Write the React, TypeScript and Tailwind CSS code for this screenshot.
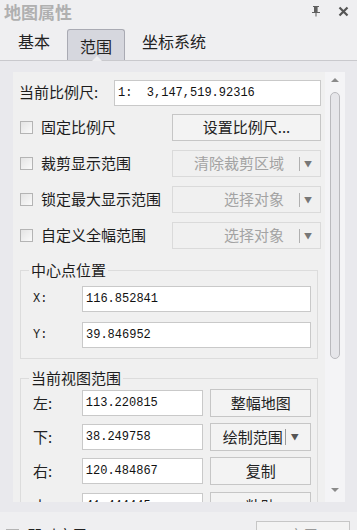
import React from 'react';

const cjk = "font-['Noto_Sans_CJK_SC',sans-serif]";
const mono = "font-['Liberation_Mono','Noto_Sans_CJK_SC',monospace]";

const CheckBox: React.FC = () => (
  <span className="inline-block w-[13px] h-[13px] shrink-0 border border-[#b4b4b4] bg-gradient-to-br from-[#e4e4e4] to-[#fafafa]" />
);

const TextBox: React.FC<{ value: string; className?: string }> = ({ value, className }) => (
  <div
    className={`h-[26px] bg-white border border-[#c9c9c9] flex items-center pl-[3px] text-[12px] text-[#111] whitespace-pre ${mono} ${className ?? ''}`}
  >
    {value}
  </div>
);

const SplitButton: React.FC<{ label: string; disabled?: boolean }> = ({ label, disabled }) => (
  <div
    className={`ml-auto w-[149px] h-[27px] border flex items-center justify-end pr-[8px] text-[15px] ${
      disabled ? 'border-[#dadada] text-[#a3a3a3]' : 'border-[#c6c6c6] text-[#222]'
    }`}
  >
    <span>{label}</span>
    <span className="ml-[15px] w-px h-[14px] bg-[#b0b0b0]" />
    <span className="ml-[4px] text-[8px] text-[#777]">▼</span>
  </div>
);

const CheckRow: React.FC<{ label: string; children: React.ReactNode }> = ({ label, children }) => (
  <div className="flex items-center h-[27px] mt-[9px]">
    <div className="pl-[1px] flex items-center gap-[8px] text-[15px] text-[#1d1d1d]">
      <CheckBox />
      <span>{label}</span>
    </div>
    {children}
  </div>
);

const GroupBox: React.FC<{ title: string; children: React.ReactNode; className?: string }> = ({
  title,
  children,
  className,
}) => (
  <div className={`relative mr-[3px] border border-[#dcdcdc] ${className ?? ''}`}>
    <span className="absolute left-[8px] -top-[12px] px-[2px] bg-[#f0f0f0] text-[15px] text-[#1d1d1d] leading-[22px]">
      {title}
    </span>
    {children}
  </div>
);

const CoordRow: React.FC<{ label: string; value: string; className?: string }> = ({ label, value, className }) => (
  <div className={`flex items-center ${className ?? ''}`}>
    <span className={`w-[49px] text-[12px] text-[#222] ${mono}`}>{label}</span>
    <TextBox value={value} className="flex-1" />
  </div>
);

const ViewRow: React.FC<{ label: string; value: string; button: string; split?: boolean; className?: string }> = ({
  label,
  value,
  button,
  split,
  className,
}) => (
  <div className={`flex items-center ${className ?? ''}`}>
    <span className="w-[49px] text-[15px] text-[#222]">{label}:</span>
    <TextBox value={value} className="w-[122px]" />
    <div className="ml-[7px] w-[101px] h-[28px] border border-[#c6c6c6] bg-[#f3f3f3] flex items-center justify-center text-[15px] text-[#222]">
      <span>{button}</span>
      {split && (
        <>
          <span className="ml-[2px] w-px h-[16px] bg-[#999]" />
          <span className="ml-[5px] text-[8px] text-[#555]">▼</span>
        </>
      )}
    </div>
  </div>
);

export default function App() {
  return (
    <div className={`w-[357px] h-[530px] overflow-hidden bg-[#efeff1] ${cjk} select-none`}>
      {/* title bar */}
      <div className="h-[22px] flex items-center pl-[4px] pr-[8px]">
        <span className="text-[17px] font-bold text-[#b0b0b0] leading-none">地图属性</span>
        <svg width="10" height="12" viewBox="0 0 10 12" className="ml-auto mr-[17px]">
          <path d="M2 1H8V2H7V7H9V8H5.5V11.5H4.5V8H1V7H3V2H2Z" fill="#5f5f5f" />
          <rect x="6" y="2" width="1" height="5" fill="#9a9a9a" />
        </svg>
        <svg width="11" height="11" viewBox="0 0 11 11">
          <path d="M1.5 1.5L9.5 9.5M9.5 1.5L1.5 9.5" stroke="#555" strokeWidth="2.2" />
        </svg>
      </div>

      {/* tabs */}
      <div className="h-[39px] flex items-end pl-[18px] border-b border-[#c9c9cd] relative">
        <span className="mb-[7px] text-[16px] text-[#222]">基本</span>
        <div className="ml-[17px] w-[58px] h-[31px] rounded-t-[3px] border border-b-0 border-[#a9aab3] bg-[#d6d7de] flex items-center justify-center pt-[2px] text-[16px] text-[#222] relative">
          范围
          <span className="absolute -bottom-[1px] left-[24px] w-0 h-0 border-l-[5px] border-r-[5px] border-b-[5px] border-l-transparent border-r-transparent border-b-[#efeff1]" />
        </div>
        <span className="ml-[17px] mb-[7px] text-[16px] text-[#222]">坐标系统</span>
      </div>

      {/* body */}
      <div className="bg-[#e9e9ed] pl-[13px] pr-[12px] pt-[11px] pb-[10px]">
        <div className="flex h-[430px]">
          <div className="flex-1 bg-[#f0f0f0] overflow-hidden pl-[6px] pr-[4px] pt-[8px]">
            <div className="flex items-center h-[25px]">
              <span className="w-[95px] text-[15px] text-[#1d1d1d]">当前比例尺:</span>
              <TextBox value="1:  3,147,519.92316" className="flex-1 h-[25px]" />
            </div>

            <CheckRow label="固定比例尺">
              <div className="ml-auto w-[149px] h-[27px] border border-[#c6c6c6] bg-[#f3f3f3] flex items-center justify-center text-[15px] text-[#222]">
                设置比例尺...
              </div>
            </CheckRow>
            <CheckRow label="裁剪显示范围">
              <SplitButton label="清除裁剪区域" disabled />
            </CheckRow>
            <CheckRow label="锁定最大显示范围">
              <SplitButton label="选择对象" disabled />
            </CheckRow>
            <CheckRow label="自定义全幅范围">
              <SplitButton label="选择对象" disabled />
            </CheckRow>

            <GroupBox title="中心点位置" className="ml-[1px] mt-[21px] pl-[12px] pr-[6px] pt-[15px] pb-[10px]">
              <CoordRow label="X:" value="116.852841" />
              <CoordRow label="Y:" value="39.846952" className="mt-[10px]" />
            </GroupBox>

            <GroupBox title="当前视图范围" className="ml-[1px] mt-[19px] pl-[12px] pr-[6px] pt-[10px] pb-[10px]">
              <ViewRow label="左" value="113.220815" button="整幅地图" />
              <ViewRow label="下" value="38.249758" button="绘制范围" split className="mt-[6px]" />
              <ViewRow label="右" value="120.484867" button="复制" className="mt-[6px]" />
              <ViewRow label="上" value="41.444445" button="粘贴" className="mt-[7px]" />
            </GroupBox>
          </div>

          {/* scrollbar */}
          <div className="w-[20px] bg-[#f4f4f6] flex flex-col items-center pt-[6px] pb-[10px]">
            <span className="w-0 h-0 border-l-[4px] border-r-[4px] border-b-[4px] border-l-transparent border-r-transparent border-b-[#8a8a8a]" />
            <div className="mt-[10px] w-[10px] h-[267px] rounded-full border border-[#b9b9bd] bg-[#e6e6ea]" />
            <span className="mt-auto w-0 h-0 border-l-[4px] border-r-[4px] border-t-[4px] border-l-transparent border-r-transparent border-t-[#8a8a8a]" />
          </div>
        </div>
      </div>

      {/* footer */}
      <div className="flex items-start pl-[6px] pr-[7px] pt-[8px]">
        <div className="flex items-center gap-[8px] text-[15px] text-[#222] mt-[4px]">
          <CheckBox />
          <span>即时应用</span>
        </div>
        <div className="ml-auto mt-[1px] w-[94px] h-[28px] border border-[#c6c6c6] bg-[#f3f3f3] flex items-center justify-center text-[15px] text-[#999]">
          应用
        </div>
      </div>
    </div>
  );
}
